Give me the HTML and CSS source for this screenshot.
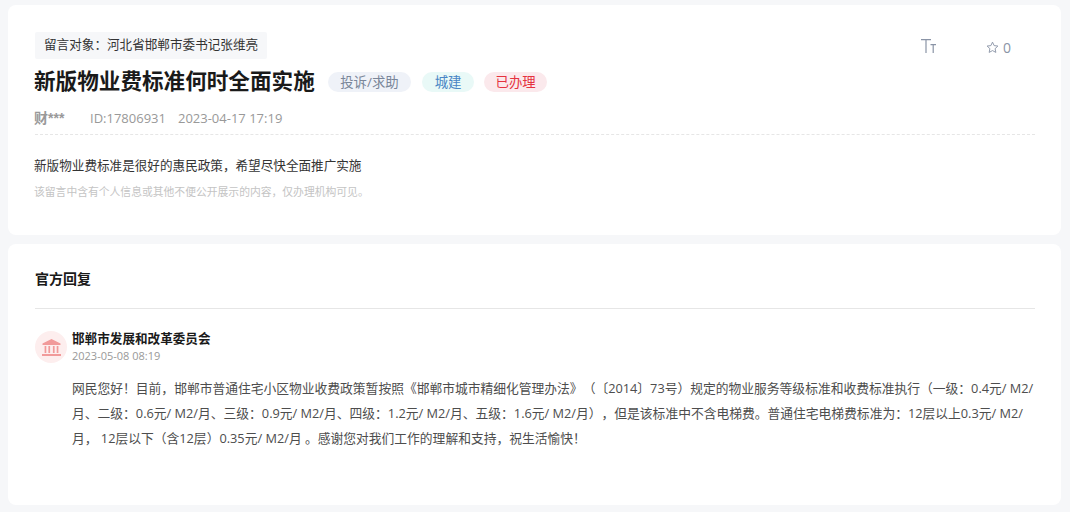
FILE: index.html
```html
<!DOCTYPE html>
<html lang="zh-CN">
<head>
<meta charset="utf-8">
<title>新版物业费标准何时全面实施</title>
<link rel="stylesheet" href="styles.css">
</head>
<body>
<main class="page">
  <section class="card card-top">
    <div class="top-row">
      <div class="top-main">
        <div class="target">留言对象：河北省邯郸市委书记张维亮</div>
        <div class="title-row">
          <h1 class="title">新版物业费标准何时全面实施</h1>
          <span class="tag tag-gray">投诉/求助</span>
          <span class="tag tag-green">城建</span>
          <span class="tag tag-red">已办理</span>
        </div>
      </div>
      <div class="tools">
        <svg class="font-tool" viewBox="0 0 15 14" width="15" height="14"><path d="M0 .6H10M5 .6V14M9.5 5.6H15M12.2 5.6V14" fill="none" stroke="currentColor" stroke-width="1.2"/></svg>
        <span class="fav">
          <svg class="star" viewBox="0 0 14 14" width="13" height="13"><path d="M7 1.2l1.75 3.75 4.05.5-3 2.8.8 4.05L7 10.3l-3.6 2 .8-4.05-3-2.8 4.05-.5z" fill="none" stroke="currentColor" stroke-width="1" stroke-linejoin="round"/></svg>
          <span>0</span>
        </span>
      </div>
    </div>
    <div class="meta">
      <span class="author">财***</span>
      <span class="id">ID:17806931</span>
      <span>2023-04-17 17:19</span>
    </div>
    <p class="body-text">新版物业费标准是很好的惠民政策，希望尽快全面推广实施</p>
    <p class="notice">该留言中含有个人信息或其他不便公开展示的内容，仅办理机构可见。</p>
  </section>
  <section class="card card-reply">
    <h2 class="reply-head">官方回复</h2>
    <div class="reply">
      <div class="org">
        <span class="avatar">
          <svg viewBox="0 0 19 17" width="19" height="17"><path d="M9.5 0L.5 4.4V6h18V4.4z" fill="currentColor"/><path d="M2.6 7h1.7v7H2.6zM6.4 7h1.7v7H6.4zM10.9 7h1.7v7h-1.7zM14.7 7h1.7v7h-1.7zM0 15h19v2H0z" fill="currentColor"/></svg>
        </span>
        <div>
          <div class="org-name">邯郸市发展和改革委员会</div>
          <div class="org-date">2023-05-08 08:19</div>
        </div>
      </div>
      <p class="reply-text">网民您好！目前，邯郸市普通住宅小区物业收费政策暂按照《邯郸市城市精细化管理办法》（〔2014〕73号）规定的物业服务等级标准和收费标准执行（一级：0.4元/ M2/月、二级：0.6元/ M2/月、三级：0.9元/ M2/月、四级：1.2元/ M2/月、五级：1.6元/ M2/月），但是该标准中不含电梯费。普通住宅电梯费标准为：12层以上0.3元/ M2/月， 12层以下（含12层）0.35元/ M2/月 。感谢您对我们工作的理解和支持，祝生活愉快！</p>
    </div>
  </section>
</main>
</body>
</html>
```
FILE: styles.css
```css
* { box-sizing: border-box; }
html, body { margin: 0; padding: 0; }
body {
  background: #f6f7f9;
  font-family: "Open Sans", "Noto Sans CJK SC", sans-serif;
  color: #333;
  overflow: hidden;
  text-spacing-trim: space-all;
}
.page {
  display: flex;
  flex-direction: column;
  gap: 9px;
  width: 1053px;
  margin-left: 8px;
  padding-top: 5px;
}
.card {
  background: #fff;
  border-radius: 8px;
  padding: 0 26px 0 27px;
}
.card-top { height: 230px; padding-top: 27px; }
.card-reply { height: 261px; padding-top: 26px; }
.top-row { display: flex; justify-content: space-between; }
.target {
  height: 27px;
  width: fit-content;
  line-height: 26px;
  padding: 0 9px;
  font-size: 12.6px;
  background: #f6f7f9;
  border-radius: 2px;
  color: #333;
}
.title-row { display: flex; align-items: center; margin-top: 5px; height: 34px; }
.title {
  margin: 0 13px 0 -1px;
  font-size: 21.6px;
  line-height: 34px;
  font-weight: 700;
  color: #1a1a1a;
}
.tag {
  height: 20px;
  line-height: 20px;
  margin-top: 2px;
  border-radius: 10px;
  font-size: 13.4px;
  margin-right: 11px;
  padding: 0 12.5px;
}
.tag-gray { background: #eff2f8; color: #7a8699; }
.tag-green { background: #e9f9f7; color: #4a86c5; }
.tag-red { background: #fbe9ec; color: #e5323e; margin-right: 0; margin-left: -1px; padding: 0 11.5px; }
.tools { display: flex; align-items: center; height: 30px; color: #8a94a6; }
.font-tool { display: block; margin: 0 50px 2px 0; color: #8a94a6; }
.fav { display: flex; align-items: center; gap: 4px; font-size: 14px; margin-right: 24px; }
.star { display: block; }
.meta {
  display: flex;
  height: 37px;
  padding-top: 10px;
  line-height: 20px;
  font-size: 13px;
  color: #999;
  border-bottom: 1px dashed #e6e6e6;
}
.author {
  font-family: "Liberation Sans", "Noto Sans CJK SC", sans-serif;
  font-size: 14px;
  font-weight: 700;
  width: 56px;
  margin-left: -1px;
}
.id { margin-right: 12px; }
.body-text { margin: 22px 0 0 -1px; font-size: 12.6px; line-height: 18px; color: #333; }
.notice { margin: 9px 0 0 -1px; font-size: 10.8px; line-height: 16px; color: #c4c4c4; }
.reply-head {
  margin: 0;
  font-size: 14px;
  line-height: 18px;
  font-weight: 700;
  color: #1a1a1a;
  padding-bottom: 20px;
  border-bottom: 1px solid #e6e6e6;
}
.reply { padding-top: 21px; }
.org { display: flex; align-items: center; gap: 5px; }
.avatar {
  display: flex;
  align-items: center;
  justify-content: center;
  width: 32px;
  height: 32px;
  border-radius: 50%;
  background: #fdeeee;
  color: #f19a9a;
  flex: none;
}
.org-name { font-size: 12.6px; line-height: 17px; font-weight: 700; color: #1a1a1a; }
.org-date { font-size: 11px; line-height: 17px; color: #999; }
.reply-text {
  margin: 12px 0 0 37px;
  font-size: 12.78px;
  line-height: 25px;
  color: #4d4d4d;
}
```
